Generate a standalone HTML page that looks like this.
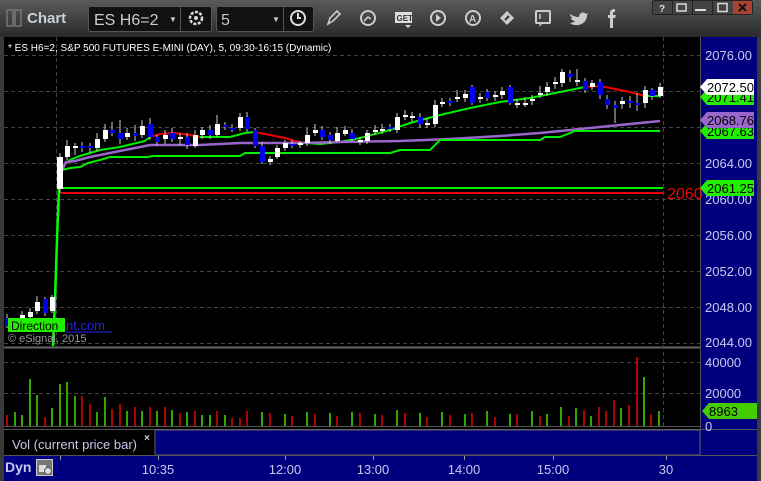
<!DOCTYPE html>
<html><head><meta charset="utf-8"><style>
html,body{margin:0;padding:0;background:#000;}
body{width:761px;height:481px;overflow:hidden;position:relative;font-family:"Liberation Sans",sans-serif;}
svg{position:absolute;left:0;top:0;}
</style></head><body>
<svg width="761" height="481" viewBox="0 0 761 481" xmlns="http://www.w3.org/2000/svg" font-family="Liberation Sans, sans-serif">
<defs>
<linearGradient id="tb" x1="0" y1="0" x2="0" y2="1"><stop offset="0" stop-color="#5a5a5a"/><stop offset="1" stop-color="#2a2a2a"/></linearGradient>
</defs>
<!-- frame -->
<rect x="0" y="0" width="761" height="481" fill="#3a3a3a"/>
<rect x="0" y="0" width="761" height="37" fill="url(#tb)"/>
<rect x="4" y="37" width="696" height="311" fill="#000"/>
<rect x="700" y="37" width="57" height="418" fill="#00007f"/>
<line x1="700.5" y1="37" x2="700.5" y2="430" stroke="#555"/>
<rect x="4" y="348" width="696" height="82" fill="#000"/>
<line x1="4" y1="347.5" x2="700" y2="347.5" stroke="#666" stroke-width="2"/>
<line x1="4" y1="429.5" x2="757" y2="429.5" stroke="#555"/>
<rect x="4" y="430" width="151" height="25" fill="#000"/>
<rect x="155" y="430" width="545" height="25" fill="#00007f" stroke="#666"/>
<rect x="4" y="455" width="753" height="26" fill="#00007f"/>
<line x1="4" y1="455.5" x2="757" y2="455.5" stroke="#555"/>

<!-- title bar -->
<rect x="7" y="10" width="6" height="16" fill="none" stroke="#777" stroke-width="1.5"/>
<rect x="15" y="10" width="6" height="16" fill="none" stroke="#777" stroke-width="1.5"/>
<text x="27" y="23" fill="#c8d0dc" font-size="15" font-weight="bold">Chart</text>
<rect x="88.5" y="6.5" width="123" height="25" rx="2" fill="#111" stroke="#555"/>
<line x1="180.5" y1="6" x2="180.5" y2="31" stroke="#555"/>
<text x="94" y="25" fill="#ccc" font-size="16">ES H6=2</text>
<text x="169" y="22" fill="#ccc" font-size="8">▼</text>
<circle cx="196" cy="18" r="6" fill="none" stroke="#ddd" stroke-width="2.5" stroke-dasharray="3 1.5"/>
<circle cx="196" cy="18" r="2" fill="#ddd"/>
<rect x="216.5" y="6.5" width="97" height="25" rx="2" fill="#111" stroke="#555"/>
<line x1="283.5" y1="6" x2="283.5" y2="31" stroke="#555"/>
<text x="221" y="25" fill="#ccc" font-size="16">5</text>
<text x="272" y="22" fill="#ccc" font-size="8">▼</text>
<circle cx="298" cy="18" r="7" fill="none" stroke="#ddd" stroke-width="2"/>
<path d="M298 13v5h3" stroke="#ddd" stroke-width="2" fill="none"/>
<path d="M328 24l2-6 7-7 3 3-7 7z" fill="none" stroke="#ccc" stroke-width="1.6"/>
<circle cx="368" cy="18" r="7" fill="none" stroke="#ccc" stroke-width="2"/>
<path d="M364 21l4-4 3 2" stroke="#ccc" stroke-width="1.6" fill="none"/>
<rect x="395" y="12" width="17" height="11" fill="#ddd"/>
<text x="396.5" y="21" fill="#333" font-size="8" font-weight="bold">GET</text>
<path d="M405 25l3 3 3-3z" fill="#ddd"/>
<circle cx="438" cy="18" r="7" fill="none" stroke="#ccc" stroke-width="2"/>
<path d="M436 14v8l5-4z" fill="#ccc"/>
<circle cx="473" cy="18" r="7" fill="none" stroke="#ccc" stroke-width="2"/>
<text x="469" y="22" fill="#ccc" font-size="10" font-weight="bold">A</text>
<path d="M500 18l7-7 7 7-7 7z" fill="#ccc"/>
<path d="M505 20l4-4" stroke="#333" stroke-width="2"/>
<rect x="536" y="11" width="14" height="12" rx="1" fill="none" stroke="#ccc" stroke-width="2"/>
<path d="M540 23l-1 4 4-4" fill="#ccc"/>
<line x1="540" y1="14" x2="540" y2="19" stroke="#ccc" stroke-width="1.5"/>
<path d="M570 14c3 2 6 3 9 3 0-4 4-6 7-3l2-1-1 2c0 7-6 11-12 10-2 0-4-1-5-2 2 0 4-1 5-2-2 0-4-2-4-3h2c-2-1-3-2-3-4" fill="#ccc"/>
<path d="M610 28v-10h-2v-3h2v-2c0-3 2-4 5-4v3c-1 0-2 0-2 1v2h3l-1 3h-2v10z" fill="#ccc"/>
<rect x="652.5" y="0.5" width="100" height="14" rx="2" fill="#444" stroke="#222"/>
<rect x="733" y="1" width="19" height="13" fill="#a84232"/>
<line x1="672.5" y1="1" x2="672.5" y2="14" stroke="#222"/>
<line x1="692.5" y1="1" x2="692.5" y2="14" stroke="#222"/>
<line x1="712.5" y1="1" x2="712.5" y2="14" stroke="#222"/>
<text x="659" y="12" fill="#ddd" font-size="10" font-weight="bold">?</text>
<rect x="677" y="4" width="9" height="7" fill="none" stroke="#ddd" stroke-width="1.5"/>
<path d="M695 10h11" stroke="#ddd" stroke-width="2"/>
<rect x="718" y="3.5" width="9" height="8" fill="none" stroke="#ddd" stroke-width="1.5"/>
<path d="M739 4l7 7M746 4l-7 7" stroke="#111" stroke-width="2"/>

<!-- grid -->
<g stroke="#444" stroke-dasharray="4 3" stroke-width="1">
<line x1="4" y1="55.5" x2="700" y2="55.5"/>
<line x1="4" y1="91.5" x2="700" y2="91.5"/>
<line x1="4" y1="127.5" x2="700" y2="127.5"/>
<line x1="4" y1="163.5" x2="700" y2="163.5"/>
<line x1="4" y1="199.5" x2="700" y2="199.5"/>
<line x1="4" y1="235.5" x2="700" y2="235.5"/>
<line x1="4" y1="271.5" x2="700" y2="271.5"/>
<line x1="4" y1="307.5" x2="700" y2="307.5"/>
<line x1="4" y1="343.5" x2="700" y2="343.5"/>
<line x1="4" y1="362.5" x2="700" y2="362.5"/>
<line x1="4" y1="393.5" x2="700" y2="393.5"/>
<line x1="56.5" y1="37" x2="56.5" y2="346"/>
<line x1="663.5" y1="37" x2="663.5" y2="430"/>
</g>
<line x1="4" y1="426.5" x2="700" y2="426.5" stroke="#555"/>
<text x="8" y="51" fill="#fff" font-size="10">* ES H6=2, S&amp;P 500 FUTURES E-MINI (DAY), 5, 09:30-16:15 (Dynamic)</text>

<!-- horizontal levels -->
<line x1="58" y1="188" x2="663" y2="188" stroke="#00ee00" stroke-width="2"/>
<line x1="61" y1="193" x2="663" y2="193" stroke="#ee0000" stroke-width="2"/>
<polyline points="53,346 55,300 57,240 59,189 62,170" fill="none" stroke="#00ff00" stroke-width="2.5"/>

<!-- MAs -->
<polyline points="62,170 66,163 70,160 80,156 100,150 120,147 145,141 150,137" fill="none" stroke="#00ee00" stroke-width="2"/>
<polyline points="150,137 160,134 175,133 190,135 200,137" fill="none" stroke="#ee0000" stroke-width="2"/>
<polyline points="200,137 230,137 245,133 255,132" fill="none" stroke="#00ee00" stroke-width="2"/>
<polyline points="255,132 270,135 285,138 295,141 305,143" fill="none" stroke="#ee0000" stroke-width="2"/>
<polyline points="305,143 320,144 340,142 360,138 390,130 410,123 440,115 470,108 500,102 530,98 560,92 585,87" fill="none" stroke="#00ee00" stroke-width="2"/>
<polyline points="585,87 600,86 615,89 630,92 645,96" fill="none" stroke="#ee0000" stroke-width="2"/>
<polyline points="645,96 660,96" fill="none" stroke="#00ee00" stroke-width="2"/>
<polyline points="62,170 66,162 75,161 90,157 110,153 130,149 150,145 200,145 240,143 300,143 340,142 400,141 450,139 500,136 540,133 570,130 600,127 630,124 660,121" fill="none" stroke="#9966cc" stroke-width="2.5"/>
<polyline points="62,170 70,168 80,167 88,163 100,160 110,157 148,157 152,156 240,156 245,153 390,153 400,150 430,150 440,140 540,140 545,137 560,137 575,131 660,131" fill="none" stroke="#00ee00" stroke-width="2"/>

<!-- candles -->
<g stroke="#ccc" stroke-width="1">
<path d="M7 314v14M15 318v10M22 311v14M30 308v12M37 296v18M45 297v19M52 295v18M60 153v40M67 140v20M75 143v12M82 142v10M90 143v10M97 133v18M105 124v18M112 122v14M120 120v24M127 128v12M135 125v16M142 120v18M150 118v22M157 135v10M165 130v14M172 128v14M180 133v12M187 133v16M195 130v18M202 127v12M210 125v14M217 115v22M225 122v8M232 124v8M240 113v18M247 112v20M255 128v20M262 142v22M270 156v9M277 145v14M285 140v11M292 140v8M300 141v7M307 128v18M315 124v12M322 126v14M330 132v12M337 127v15M345 126v10M352 129v12M360 137v8M367 130v14M375 125v10M382 124v10M390 124v8M397 113v20M405 110v10M412 112v10M420 113v15M427 118v10M435 100v27M442 98v9M450 98v8M457 90v12M465 90v12M472 85v20M480 93v10M487 89v12M495 91v10M502 87v12M510 85v20M517 99v9M525 97v10M532 95v10M540 86v12M547 82v14M555 77v12M562 69v18M570 70v12M577 69v17M585 78v15M592 80v10M600 79v20M607 95v14M615 101v22M622 97v12M630 96v12M637 93v18M645 86v22M652 88v12M660 83v15"/>
</g>
<g fill="#fff">
<rect x="13" y="322" width="5" height="3"/><rect x="20" y="315" width="5" height="7"/><rect x="28" y="312" width="5" height="5"/><rect x="35" y="302" width="5" height="9"/><rect x="50" y="297" width="5" height="14"/>
<rect x="57" y="157" width="6" height="32"/><rect x="65" y="146" width="5" height="11"/><rect x="73" y="146" width="5" height="2"/><rect x="95" y="139" width="5" height="9"/><rect x="103" y="130" width="5" height="9"/><rect x="125" y="133" width="5" height="4"/><rect x="140" y="126" width="5" height="9"/><rect x="163" y="135" width="5" height="4"/><rect x="178" y="137" width="5" height="2"/><rect x="193" y="135" width="5" height="11"/><rect x="200" y="130" width="5" height="5"/><rect x="215" y="124" width="5" height="11"/><rect x="238" y="117" width="5" height="11"/><rect x="268" y="159" width="5" height="3"/><rect x="275" y="148" width="5" height="9"/><rect x="283" y="143" width="5" height="5"/><rect x="298" y="143" width="5" height="2"/><rect x="305" y="135" width="5" height="8"/><rect x="313" y="130" width="5" height="3"/><rect x="335" y="133" width="5" height="8"/><rect x="343" y="130" width="5" height="4"/><rect x="358" y="140" width="5" height="2"/><rect x="365" y="133" width="5" height="8"/><rect x="373" y="130" width="5" height="2"/><rect x="380" y="129" width="5" height="2"/><rect x="395" y="117" width="5" height="13"/><rect x="403" y="115" width="5" height="2"/><rect x="410" y="116" width="5" height="2"/><rect x="425" y="123" width="5" height="2"/><rect x="433" y="105" width="5" height="19"/><rect x="440" y="102" width="5" height="2"/><rect x="455" y="97" width="5" height="2"/><rect x="463" y="94" width="5" height="4"/><rect x="478" y="97" width="5" height="2"/><rect x="493" y="95" width="5" height="2"/><rect x="500" y="91" width="5" height="4"/><rect x="515" y="103" width="5" height="2"/><rect x="523" y="103" width="5" height="2"/><rect x="530" y="99" width="5" height="2"/><rect x="538" y="93" width="5" height="2"/><rect x="545" y="87" width="5" height="5"/><rect x="553" y="82" width="5" height="2"/><rect x="560" y="72" width="5" height="11"/><rect x="575" y="80" width="5" height="2"/><rect x="590" y="83" width="5" height="4"/><rect x="620" y="101" width="5" height="3"/><rect x="643" y="90" width="5" height="13"/><rect x="658" y="87" width="5" height="9"/>
</g>
<g fill="#0000ee">
<rect x="5" y="318" width="5" height="8"/><rect x="43" y="299" width="5" height="14"/>
<rect x="80" y="146" width="5" height="2"/><rect x="88" y="146" width="5" height="2"/><rect x="110" y="130" width="5" height="3"/><rect x="118" y="133" width="5" height="6"/><rect x="133" y="133" width="5" height="3"/><rect x="148" y="124" width="5" height="13"/><rect x="155" y="137" width="5" height="5"/><rect x="170" y="133" width="5" height="6"/><rect x="185" y="137" width="5" height="8"/><rect x="208" y="130" width="5" height="5"/><rect x="223" y="125" width="5" height="2"/><rect x="230" y="128" width="5" height="2"/><rect x="245" y="117" width="5" height="12"/><rect x="253" y="130" width="5" height="16"/><rect x="260" y="146" width="5" height="16"/><rect x="290" y="144" width="5" height="2"/><rect x="320" y="130" width="5" height="7"/><rect x="328" y="135" width="5" height="5"/><rect x="350" y="133" width="5" height="6"/><rect x="388" y="127" width="5" height="2"/><rect x="418" y="117" width="5" height="7"/><rect x="448" y="101" width="5" height="2"/><rect x="470" y="87" width="5" height="16"/><rect x="485" y="92" width="5" height="6"/><rect x="508" y="87" width="5" height="16"/><rect x="568" y="74" width="5" height="3"/><rect x="583" y="81" width="5" height="9"/><rect x="598" y="82" width="5" height="13"/><rect x="605" y="99" width="5" height="6"/><rect x="613" y="105" width="5" height="3"/><rect x="628" y="101" width="5" height="2"/><rect x="635" y="103" width="5" height="2"/><rect x="650" y="90" width="5" height="6"/>
</g>

<!-- watermark -->
<rect x="8" y="318" width="57" height="14" fill="#22ee00"/>
<text x="11" y="330" fill="#000" font-size="12">Direction</text>
<text x="66" y="330" fill="#2222ee" font-size="13">nt.com</text>
<line x1="66" y1="332" x2="112" y2="332" stroke="#2222ee"/>
<text x="8" y="342" fill="#999" font-size="11">© eSignal, 2015</text>

<!-- price axis -->
<g fill="#c8c8ec" font-size="13">
<text x="705" y="60">2076.00</text>
<text x="705" y="168">2064.00</text>
<text x="705" y="204">2060.00</text>
<text x="705" y="240">2056.00</text>
<text x="705" y="276">2052.00</text>
<text x="705" y="312">2048.00</text>
<text x="705" y="347">2044.00</text>
</g>
<path d="M700 188l7-8h47v16h-47z" fill="#22ee00"/><text x="707" y="193" fill="#000" font-size="13">2061.25</text>
<path d="M700 131l7-8h47v16h-47z" fill="#22ee00"/><text x="707" y="136" fill="#000" font-size="13">2067.63</text>
<path d="M700 120l7-8h47v16h-47z" fill="#9966cc"/><text x="707" y="125" fill="#000" font-size="13">2068.76</text>
<path d="M700 97l7-8h47v16h-47z" fill="#22ee00"/><text x="707" y="102" fill="#000" font-size="13">2071.41</text>
<path d="M700 87l7-8h47v16h-47z" fill="#fff"/><text x="707" y="92" fill="#000" font-size="13">2072.50</text>
<text x="667" y="199" fill="#ee0000" font-size="16">2060</text>
<rect x="700" y="37" width="0" height="0"/>
<rect x="700" y="37" width="57" height="0"/>

<!-- volume -->
<g stroke-width="1.5">
<g stroke="#44dd00"><path d="M15 426v-14M22 426v-11M30 426v-47M37 426v-31M52 426v-18M60 426v-42M67 426v-44M75 426v-30M97 426v-14M105 426v-29M127 426v-15M142 426v-15M157 426v-15M172 426v-16M187 426v-14M202 426v-11M210 426v-11M225 426v-11M262 426v-14M285 426v-12M307 426v-14M330 426v-13M352 426v-14M375 426v-12M397 426v-16M420 426v-13M442 426v-14M465 426v-12M487 426v-15M510 426v-12M532 426v-15M547 426v-12M561 426v-19M576 426v-18M591 426v-10M621 426v-18M644 426v-49M659 426v-15"/></g>
<g stroke="#ee0000"><path d="M7 426v-11M45 426v-9M82 426v-30M90 426v-22M112 426v-17M120 426v-22M135 426v-19M150 426v-19M165 426v-19M180 426v-13M195 426v-15M217 426v-15M232 426v-8M240 426v-8M247 426v-15M270 426v-13M292 426v-10M315 426v-12M337 426v-10M360 426v-13M382 426v-11M405 426v-13M427 426v-9M450 426v-11M472 426v-13M495 426v-9M517 426v-12M540 426v-10M569 426v-10M584 426v-16M599 426v-19M606 426v-15M614 426v-26M629 426v-21M637 426v-69M651 426v-12"/></g>
</g>
<g fill="#c8c8ec" font-size="13">
<text x="705" y="367">40000</text>
<text x="705" y="398">20000</text>
<text x="705" y="431">0</text>
</g>
<path d="M702 411l7-8h48v16h-48z" fill="#44cc00"/><text x="709" y="416" fill="#000" font-size="13">8963</text>

<!-- legend -->
<text x="12" y="449" fill="#c8c8ec" font-size="13">Vol (current price bar)</text>
<text x="144" y="441" fill="#ccc" font-size="10" font-weight="bold">×</text>

<!-- time axis -->
<text x="5" y="472" fill="#c8c8ec" font-size="14" font-weight="bold">Dyn</text>
<rect x="36.5" y="459.5" width="16" height="16" fill="#777" stroke="#ccc"/>
<rect x="39" y="465" width="7" height="7" fill="#ddd"/>
<circle cx="48" cy="471" r="3.5" fill="#ddd" stroke="#555"/>
<g stroke="#999"><path d="M60.5 456v4M158.5 456v4M285.5 456v4M373.5 456v4M464.5 456v4M553.5 456v4M666.5 456v4"/></g>
<g fill="#c8c8ec" font-size="13" text-anchor="middle">
<text x="158" y="474">10:35</text>
<text x="285" y="474">12:00</text>
<text x="373" y="474">13:00</text>
<text x="464" y="474">14:00</text>
<text x="553" y="474">15:00</text>
<text x="666" y="474">30</text>
</g>
</svg>
</body></html>
